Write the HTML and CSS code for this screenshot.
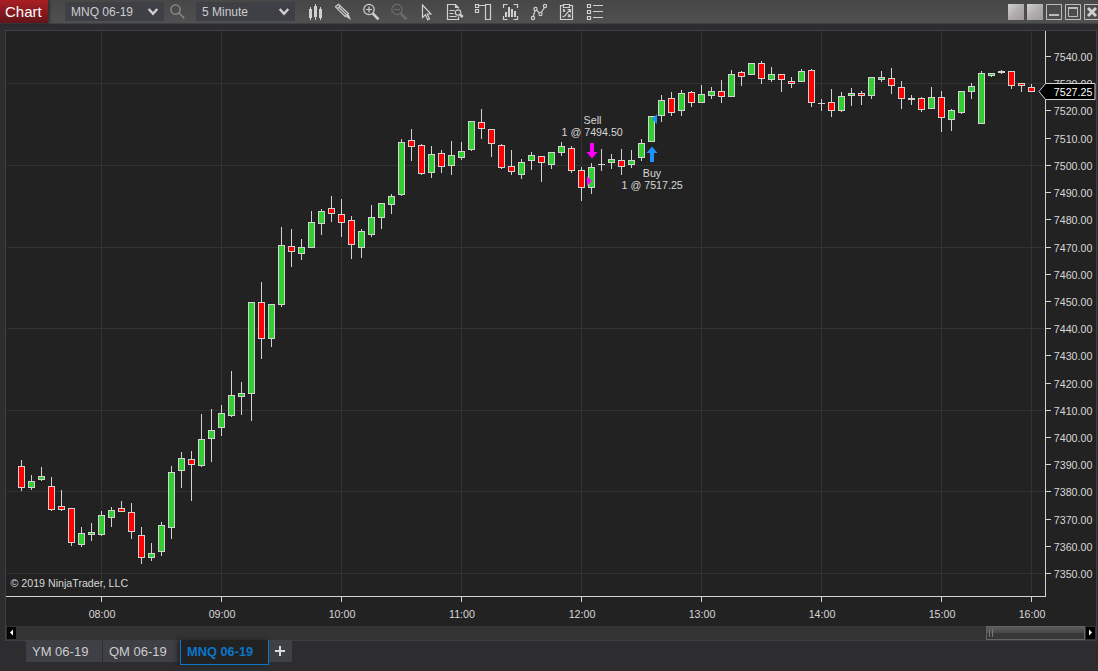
FILE: index.html
```html
<!DOCTYPE html>
<html lang="en">
<head>
  <meta charset="UTF-8">
  <meta name="viewport" content="width=device-width, initial-scale=1.0">
  <title>Chart - MNQ 06-19</title>
  <link rel="stylesheet" href="styles.css">
</head>
<body>

<header class="titlebar">
  <div class="title">Chart</div>
  <div class="combo instrument">MNQ 06-19
    <svg width="12" height="8" viewBox="0 0 12 8"><path d="M1.7 1l4.300 4.700 4.300-4.700"/></svg>
  </div>
  <svg class="search" width="16" height="16" viewBox="0 0 16 16"><circle cx="5.500" cy="5.500" r="4.600"/><path d="M8.900 8.900l5.300 5.300"/></svg>
  <div class="combo interval">5 Minute
    <svg width="12" height="8" viewBox="0 0 12 8"><path d="M1.7 1l4.300 4.700 4.300-4.700"/></svg>
  </div>
  <div class="tools">
    <!-- chart style -->
    <svg viewBox="0 0 20 20"><path class="solid" d="M3 7h3v9h-3zM8 4h3v11h-3zM13 7h3v9h-3zM4 5h1v13h-1zM9 2h1v16h-1zM14 5h1v13h-1z"/></svg>
    <!-- drawing tools -->
    <svg viewBox="0 0 20 20"><path d="M1.500 4.800l3-2.600 9.800 9.300-3.200 3zM3.300 6.600l3-2.700M4.800 5.300l7.800 7.600"/><path class="solid" d="M11.800 14.800l2.800-2.800 2.400 6z"/></svg>
    <!-- zoom in / out -->
    <svg viewBox="0 0 20 20"><circle cx="7" cy="7.500" r="5.200"/><path d="M4 7.500h6M7 4.500v6"/><path class="thick" d="M10.800 11.500l5.700 5.800"/></svg>
    <svg class="off" viewBox="0 0 20 20"><circle cx="7" cy="7.500" r="5.200"/><path d="M4 7.500h6"/><path class="thick" d="M10.800 11.500l5.700 5.800"/></svg>
    <!-- cursor -->
    <svg viewBox="0 0 20 20"><path d="M4.500 3v12.500l3-2.700 2.200 5 1.800-.8-2.200-5h3.600z"/></svg>
    <!-- data box -->
    <svg viewBox="0 0 20 20"><path d="M12.500 6.500v-.8l-3-3.200h-8v15h11v-3M9.500 2.500v3h3M3.500 8.500h5M3.500 11.500h4M3.500 14.500h7"/><circle cx="12" cy="10.500" r="2.700"/><path class="thick" d="M14 12.500l2.700 2.500"/></svg>
    <!-- chart trader -->
    <svg viewBox="0 0 20 20"><path d="M1.500 2.500h3v3h-3zM1.500 7.500h3v3h-3zM11.500 2.500h5v15h-5zM4.500 3.500h7"/></svg>
    <!-- data series -->
    <svg viewBox="0 0 20 20"><path d="M1.500 6v-3.500h4M11.500 2.500h4v3.500M1.500 14v3.500h4M11.500 17.500h4v-3.500"/><path class="solid" d="M3 10h2v5h-2zM6 5h2v10h-2zM9 7h2v8h-2zM12 9h2v6h-2z"/></svg>
    <!-- indicators -->
    <svg viewBox="0 0 20 20"><path d="M3.300 14.300l1.700-5.500M6.600 8.300l2.800 2.600M11.300 10.500l3-4.800"/><circle cx="3" cy="16" r="1.600"/><circle cx="5.500" cy="7" r="1.600"/><circle cx="10.500" cy="12" r="1.600"/><circle cx="15" cy="4" r="1.600"/></svg>
    <!-- strategies -->
    <svg viewBox="0 0 20 20"><path d="M5 3.500h-2.500v14h12v-14h-2.500M5.500 2.500h6v3h-6zM5 7.500l2 2M7 7.500l-2 2M10 12.500l2.500 2.500M12.500 12.500l-2.500 2.500M4.500 15l3-1.500 1-2 3.500-3.500M9.500 7.500h3v3"/></svg>
    <!-- properties -->
    <svg viewBox="0 0 20 20"><path d="M1.500 2.500h3v3h-3zM1.500 8.500h3v3h-3zM1.500 14.500h3v3h-3zM7 3.500h10M7 9.500h10M7 15.500h10"/></svg>
  </div>
  <div class="window-buttons">
    <span class="link"></span>
    <span class="link"></span>
    <svg viewBox="0 0 16 16"><path d="M.5.5h15v15h-15z"/><path class="two" d="M3 11h10"/></svg>
    <svg viewBox="0 0 16 16"><path d="M.5.5h15v15h-15zM3.500 4.500h9v8h-9z"/><path class="two" d="M3 4h10"/></svg>
    <svg viewBox="0 0 16 16"><path d="M.5.5h15v15h-15z"/><path class="cross" d="M4 4l8 8M12 4l-8 8"/></svg>
  </div>
</header>

<main class="panel">
  <svg id="chart" class="chart" viewBox="6 31 1090 595"></svg>
  <div class="scrollbar">
    <div class="arrow"><svg width="9" height="11" viewBox="0 0 9 11"><path d="M6 2.500v6l-3-3z"/></svg></div>
    <div class="thumb"></div>
    <div class="arrow"><svg width="9" height="11" viewBox="0 0 9 11"><path d="M3 2.500v6l3-3z"/></svg></div>
  </div>
</main>

<nav class="tabs">
  <div class="tab first">YM 06-19</div>
  <div class="tab second">QM 06-19</div>
  <div class="tab active">MNQ 06-19</div>
  <div class="tab add"><svg width="11" height="11" viewBox="0 0 11 11"><path d="M5 0v10M0 5h10"/></svg></div>
</nav>

<script src="chart.js"></script>
</body>
</html>
```
FILE: styles.css
```css
body {
  margin: 0;
  height: 671px;
  overflow: hidden;
  background: #2d2d30;
  color: #d0d0d0;
  font-family: "Liberation Sans", Arial, sans-serif;
  font-size: 12px;
}
.titlebar {
  display: flex;
  align-items: flex-start;
  box-sizing: border-box;
  height: 24px;
  background: linear-gradient(#474747, #505050);
  border-bottom: 1px solid #3f3f46;
}
.title {
  width: 43px;
  height: 23px;
  padding-left: 5px;
  line-height: 24px;
  font-size: 15px;
  color: #fff;
  background: linear-gradient(#a91e23, #64151a);
  box-shadow: 1px 0 3px #222;
}
.combo {
  display: flex;
  align-items: center;
  justify-content: space-between;
  box-sizing: border-box;
  width: 99px;
  height: 19px;
  margin-top: 2px;
  padding: 0 5px 0 6px;
  background: #3f3f46;
  color: #cdcdcd;
}
.combo svg { fill: none; stroke: #d0d0d0; stroke-width: 2.4; }
.instrument { margin-left: 17px; }
.interval { margin-left: 10px; }
.search {
  margin: 4px 0 0 6px;
  fill: none;
  stroke: #929292;
  stroke-width: 1.3;
}
.tools {
  display: flex;
  gap: 8px;
  margin: 2px 0 0 11px;
}
.tools svg {
  width: 20px;
  height: 20px;
  fill: none;
  stroke: #d0d0d0;
  stroke-width: 1.2;
}
.tools .solid { fill: #d0d0d0; stroke: none; }
.tools .thick { stroke-width: 2.6; }
.tools .off { stroke: #6c6c6c; }
.window-buttons {
  display: flex;
  flex: none;
  gap: 3px;
  margin: 4px -2px 0 auto;
}
.link {
  width: 16px;
  height: 16px;
  background: linear-gradient(135deg, #d2d0d0, #b1adae 50%, #a09c9d);
}
.window-buttons svg {
  width: 16px;
  height: 16px;
  fill: none;
  stroke: #bcbcbc;
}
.window-buttons .two { stroke-width: 2; }
.window-buttons .cross { stroke: #d0d0d0; stroke-width: 3; }

.panel {
  width: 1090px;
  margin: 6px 0 0 5px;
  border: 1px solid #3f3f46;
  border-bottom: none;
  background: #222;
}
.chart { display: block; width: 1090px; height: 595px; }
.chart text { font-size: 10.67px; fill: #d8d8d8; }
.chart .grid { fill: #333; }
.chart .axis { fill: #d3d3d3; }
.chart .line { fill: #d3d3d3; }
.chart .up { fill: #32cd32; }
.chart .down { fill: #f00; }
.chart .sell { fill: #f0f; }
.chart .buy { fill: #1e90ff; }
.chart .tag { fill: #000; stroke: #d3d3d3; }
.chart .last { fill: #fff; }

.scrollbar {
  display: flex;
  justify-content: space-between;
  align-items: center;
  box-sizing: border-box;
  height: 15px;
  padding: 0 1px;
  background: #333;
  border-bottom: 1px solid #3f3f46;
}
.arrow { width: 9px; height: 12px; background: #000; }
.arrow svg { display: block; fill: #fff; }
.thumb {
  box-sizing: border-box;
  width: 99px;
  height: 14px;
  margin: 0 1px 0 auto;
  border: 1px solid #646464;
  background: linear-gradient(90deg, transparent 2px, #777 2px 3px, transparent 3px 5px, #777 5px 6px, transparent 6px) 0 2px / 100% 8px no-repeat,
    linear-gradient(#5b5b5b, #484848 50%, #383838 50%, #353535);
}

.tabs {
  display: flex;
  align-items: flex-start;
  margin-left: 26px;
  margin-top: -1px;
  font-size: 13px;
}
.tab {
  box-sizing: border-box;
  height: 21px;
  margin-top: 1px;
  padding-left: 6px;
  line-height: 21px;
  background: #3f3f46;
  color: #cdcdcd;
}
.first { width: 76px; }
.second { width: 77px; margin-left: 1px; }
.active {
  position: relative;
  width: 89px;
  height: 25px;
  margin-top: 0;
  border: 1px solid #0a76cc;
  border-top: none;
  line-height: 23px;
  font-weight: bold;
  font-size: 12.8px;
  color: #0a76cc;
  background: #222;
  box-shadow: -3px 0 4px #242427;
}
.add { width: 23px; }
.add svg { display: block; margin-top: 5px; fill: none; stroke: #d8d8d8; stroke-width: 2; }
```
FILE: chart.js
```js
// one candle every 10px: [high, top, bottom, low, up(1) / down(0)]
const candles = [
  [460,466,488,491,0],[475,481,488,490,1],[467,476,480,481,1],[477,486,510,511,0],
  [490,506,510,511,0],[508,508,543,546,0],[527,533,545,547,1],[523,532,535,541,1],
  [511,515,535,536,1],[507,510,518,527,1],[501,508,512,512,0],[503,512,532,539,0],
  [527,535,558,564,0],[543,553,558,561,1],[522,525,552,556,1],[466,472,528,539,1],
  [452,458,471,488,1],[451,459,465,501,0],[414,439,466,467,1],[409,430,439,462,1],
  [405,413,428,436,1],[371,395,416,417,1],[382,393,397,415,1],[302,302,394,421,1],
  [282,302,339,359,0],[304,304,339,347,1],[227,245,305,307,1],[229,246,252,267,0],
  [239,247,254,260,1],[211,222,248,248,1],[209,211,224,235,1],[196,208,214,222,0],
  [199,214,223,237,0],[216,220,245,259,0],[229,231,248,258,1],[205,217,235,237,1],
  [203,203,218,229,1],[194,196,205,214,1],[139,142,195,196,1],[129,140,147,161,0],
  [144,145,174,175,0],[146,154,173,178,1],[150,153,167,173,0],[141,155,166,175,1],
  [142,151,158,160,1],[121,121,150,151,1],[109,122,129,139,0],[129,129,144,157,0],
  [144,145,168,169,0],[150,166,172,175,0],[159,162,175,179,1],[152,155,161,170,1],
  [156,156,163,182,0],[152,152,165,169,1],[142,146,153,156,1],[146,148,171,173,0],
  [167,170,188,201,0],[163,167,188,194,1],[149,164,165,171,1],[154,159,163,169,1],
  [149,160,167,175,0],[150,160,165,168,1],[139,143,158,161,1],[116,116,142,142,1],
  [95,100,116,122,1],[92,98,113,116,0],[90,93,111,116,1],[91,92,103,107,0],
  [85,94,103,103,1],[87,91,96,99,1],[80,91,97,103,0],[70,74,97,97,1],
  [71,72,77,86,0],[63,63,75,75,1],[61,63,79,84,0],[67,74,80,82,1],
  [74,74,80,92,0],[77,81,84,88,0],[69,71,82,82,1],[69,70,103,107,0],
  [99,103,104,111,1],[89,102,111,117,0],[92,96,111,112,1],[88,93,96,106,1],
  [91,93,96,105,0],[77,77,96,99,1],[71,77,80,82,1],[68,78,86,94,0],
  [81,87,99,109,0],[95,98,100,105,0],[97,98,110,112,0],[87,97,109,109,1],
  [91,97,118,132,0],[109,110,120,131,1],[91,91,113,114,1],[83,86,92,99,1],
  [71,73,124,124,1],[73,73,76,77,1],[70,71,73,74,0],[71,71,86,89,0],
  [83,83,86,92,0],[84,87,92,92,0]
];

let out = '';
function rect(cls, x, y, w, h) {
  if (w > 0 && h > 0) out += `<rect class="${cls}" x="${x}" y="${y}" width="${w}" height="${h}"/>`;
}
function text(x, y, str, anchor, cls) {
  out += `<text x="${x}" y="${y}" text-anchor="${anchor || 'start'}" class="${cls || ''}">${str}</text>`;
}

// time axis
const times = {101:'08:00', 221:'09:00', 341:'10:00', 461:'11:00', 581:'12:00', 701:'13:00', 821:'14:00', 941:'15:00', 1031:'16:00'};
for (const x in times) {
  rect('grid', x, 31, 1, 563);
  rect('axis', x, 597, 1, 5);
  text(+x + 1, 618, times[x], 'middle');
}
[83, 165, 247, 328, 410, 491, 573].forEach(y => rect('grid', 7, y, 1037, 1));

// price axis
rect('axis', 6, 596, 1040, 1);
rect('axis', 1045, 31, 1, 566);
for (let i = 0; i < 20; i++) {
  const y = Math.round(56 + i * 27.215);
  rect('axis', 1046, y, 5, 1);
  text(1053.8, y + 5, (7540 - i * 10).toFixed(2));
}

candles.forEach(([high, top, bottom, low, up], i) => {
  const x = 21 + i * 10;
  rect('line', x, high, 1, low - high);
  rect('line', x - 3, top, 7, bottom - top);
  rect(up ? 'up' : 'down', x - 2, top + 1, 5, bottom - top - 2);
});

// executions
out += '<path class="sell" d="M590 143h4v9h3.500l-5.500 6.500-5.500-6.500h3.500zM587 176v10l5-5z"/>';
out += '<path class="buy" d="M650 162h4v-9h3.500l-5.500-6.500-5.500 6.500h3.500zM657 114v10l-5-5z"/>';
text(592.5, 124, 'Sell', 'middle');
text(592.2, 136, '1 @ 7494.50', 'middle');
text(652, 177, 'Buy', 'middle');
text(652.2, 189, '1 @ 7517.25', 'middle');
text(10.5, 587, '© 2019 NinjaTrader, LLC');

// last price marker
out += '<path class="tag" d="M1039 91.500l6.500-8h49.500v16h-49.500z"/>';
text(1053.8, 96, '7527.25', 'start', 'last');

document.getElementById('chart').innerHTML = out;
```
